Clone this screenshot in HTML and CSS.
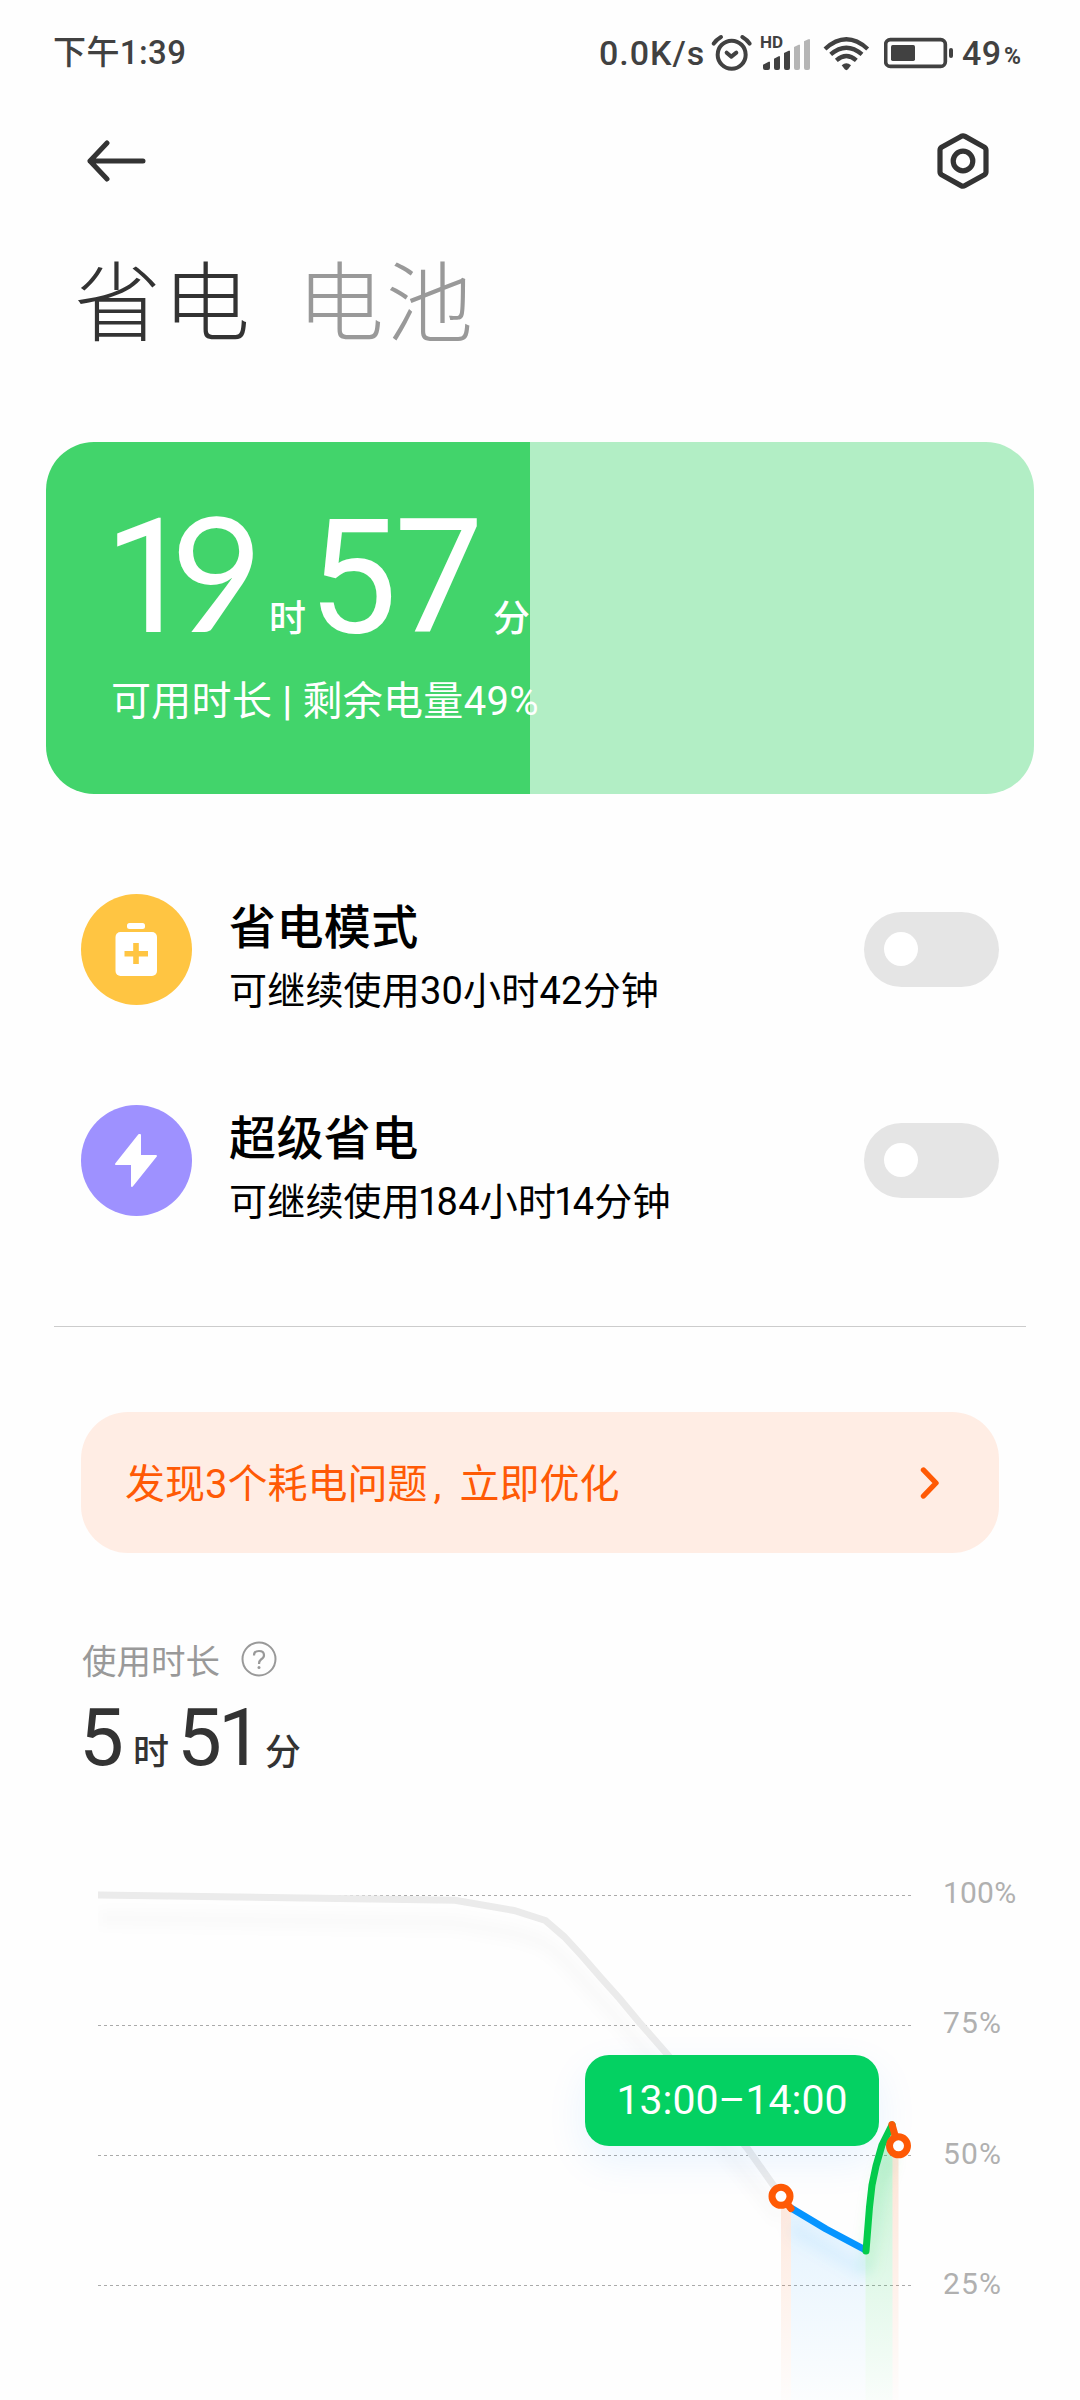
FILE: index.html
```html
<!DOCTYPE html>
<html lang="zh-CN">
<head>
<meta charset="utf-8">
<title>省电</title>
<link rel="stylesheet" href="styles.css">
</head>
<body>
<main class="screen">
  <header class="status">
    <span class="clock">下午1:39</span>
    <span class="speed">0.0K/s</span>
    <svg class="alarm" viewBox="450 95 129 120" fill="none" stroke="#414141" stroke-width="12" stroke-linecap="round" stroke-linejoin="round">
      <circle cx="515" cy="160" r="42"/>
      <path d="M461 127Q469 115 483 107M569 127Q561 115 547 107M500 154L514 166L529 154"/>
    </svg>
    <span class="signal">
      <span class="hd">HD</span>
      <svg viewBox="609 105 147 99" fill="#414141">
        <path d="M612 198V188L629 179H633V198Q633 204 627 204H618Q612 204 612 198ZM645 198V170L659 163H663V198Q663 204 657 204H651Q645 204 645 198ZM675 198V153L689 146H693V198Q693 204 687 204H681Q675 204 675 198Z"/>
        <path fill="#b5b5b5" d="M705 198V135L719 128H723V198Q723 204 717 204H711Q705 204 705 198ZM735 198V118L748 112H753V198Q753 204 747 204H741Q735 204 735 198Z"/>
      </svg>
    </span>
    <svg class="wifi" viewBox="789 100 141 111" fill="none" stroke="#414141" stroke-width="13">
      <path d="M795 142Q859 84 923 142M812 158Q859 118 906 158M829 176Q859 150 889 176"/>
      <path stroke="none" fill="#414141" d="M845 191Q859 178 873 191L864 203Q859 208 854 203Z"/>
    </svg>
    <svg class="battery" viewBox="972 108 210 96">
      <rect x="977" y="116" width="179" height="80" rx="14" fill="none" stroke="#414141" stroke-width="11"/>
      <rect x="993" y="132" width="72" height="48" rx="5" fill="#414141"/>
      <rect x="1167" y="141" width="12" height="30" rx="6" fill="#414141"/>
    </svg>
    <span class="level">49</span><span class="percent">%</span>
  </header>

  <nav class="toolbar">
    <svg class="back" viewBox="0 0 60 42" fill="none" stroke="#333" stroke-width="5" stroke-linecap="round" stroke-linejoin="round">
      <path d="M20 3L3 21L20 39M3 21H56"/>
    </svg>
    <svg class="gear" viewBox="0 0 54 58" fill="none" stroke="#333" stroke-width="5.2" stroke-linejoin="round">
      <path d="M25 4.400Q27 3.300 29 4.400L48 15Q50 16.200 50 18V40Q50 41.800 48 43L29 53.600Q27 54.700 25 53.600L6 43Q4 41.800 4 40V18Q4 16.200 6 15Z"/>
      <circle cx="27" cy="29" r="9.800"/>
    </svg>
  </nav>

  <div class="tabs">
    <h1 class="tab active">省电</h1>
    <h1 class="tab">电池</h1>
  </div>

  <section class="card">
    <div class="big">
      <span class="num first">1<span class="nine">9</span></span><span class="unit">时</span><span class="num second">57</span><span class="unit">分</span>
    </div>
    <div class="caption">可用时长<span class="bar">|</span>剩余电量49%</div>
  </section>

  <section class="modes">
    <div class="mode">
      <svg class="badge" viewBox="0 0 111 111">
        <circle cx="55.500" cy="55.500" r="55.500" fill="#ffc542"/>
        <rect x="46" y="29" width="18" height="6" rx="2.500" fill="#fff"/>
        <rect x="34.500" y="38" width="41.500" height="44" rx="5" fill="#fff"/>
        <path d="M55 49V70M43.500 59.700H67" stroke="#ffc542" stroke-width="5.600"/>
      </svg>
      <div class="info">
        <div class="name">省电模式</div>
        <div class="desc">可继续使用30小时42分钟</div>
      </div>
      <div class="toggle"><i></i></div>
    </div>
    <div class="mode">
      <svg class="badge" viewBox="0 0 111 111">
        <circle cx="55.500" cy="55.500" r="55.500" fill="#9e91ff"/>
        <path d="M58 30L35 59H51V81L75 51H59V30Z" fill="#fff" stroke="#fff" stroke-width="2" stroke-linejoin="round"/>
      </svg>
      <div class="info">
        <div class="name">超级省电</div>
        <div class="desc">可继续使用<span class="one">1</span>84小时<span class="one">1</span>4分钟</div>
      </div>
      <div class="toggle"><i></i></div>
    </div>
  </section>

  <hr class="divider">

  <section class="notice">
    <span class="message">发现3个耗电问题<span class="comma">,</span>立即优化</span>
    <svg viewBox="0 0 20 34" fill="none" stroke="#ff5a05" stroke-width="5.400" stroke-linecap="round" stroke-linejoin="round"><path d="M3.500 4L16 17L3.500 30"/></svg>
  </section>

  <section class="usage">
    <div class="label">使用时长
      <svg viewBox="0 0 36 36" fill="none" stroke="#999" stroke-width="2"><circle cx="18" cy="18" r="16.500"/><path d="M13 14.500Q13 10 18 10Q23 10 23 14.200Q23 16.500 20 18.500Q18 20 18 23" stroke-width="2.200"/><circle cx="18" cy="26.600" r="1.500" fill="#999" stroke="none"/></svg>
    </div>
    <div class="total"><span class="n hours">5</span><span class="u">时</span><span class="n minutes">51</span><span class="u">分</span></div>
  </section>

  <section class="chart">
    <svg viewBox="0 1840 1080 560">
      <defs>
        <linearGradient id="fo" gradientUnits="userSpaceOnUse" x1="0" y1="2130" x2="0" y2="2400"><stop offset="0" stop-color="#ff5a05" stop-opacity=".17"/><stop offset="1" stop-color="#ff5a05" stop-opacity=".01"/></linearGradient>
        <linearGradient id="fb" gradientUnits="userSpaceOnUse" x1="0" y1="2200" x2="0" y2="2400"><stop offset="0" stop-color="#0795ff" stop-opacity=".11"/><stop offset="1" stop-color="#0795ff" stop-opacity=".01"/></linearGradient>
        <linearGradient id="fg" gradientUnits="userSpaceOnUse" x1="0" y1="2124" x2="0" y2="2400"><stop offset="0" stop-color="#04cc4a" stop-opacity=".24"/><stop offset="1" stop-color="#04cc4a" stop-opacity=".02"/></linearGradient>
        <filter id="soft" filterUnits="userSpaceOnUse" x="98" y="1840" width="840" height="560"><feGaussianBlur stdDeviation="7"/></filter>
      </defs>
      <path d="M98 1895.500H912M98 2025.500H912M98 2155.500H912M98 2285.500H912" stroke="#aaa" stroke-width="1" stroke-dasharray="3 3"/>
      <g class="ticks">
        <text class="full" x="943" y="1903">100%</text>
        <text x="943" y="2033">75%</text>
        <text x="943" y="2164">50%</text>
        <text x="943" y="2294">25%</text>
      </g>
      <path d="M781 2196L791 2208V2400H781Z" fill="url(#fo)"/>
      <path d="M791 2208L826 2229L865.500 2250V2400H791Z" fill="url(#fb)"/>
      <path d="M865.500 2250L869 2207L875 2168L882 2145L892.500 2124V2400H865.500Z" fill="url(#fg)"/>
      <path d="M892.500 2124L898.500 2146V2400H892.500Z" fill="url(#fo)"/>
      <g filter="url(#soft)" fill="none" stroke-width="12">
        <path d="M98 1918L455 1923L514 1933L545 1943L564 1959L602 2001L667 2076L781 2219" stroke="#000" stroke-opacity=".022"/>
        <path d="M791 2228L865 2272" stroke="#0795ff" stroke-opacity=".08"/>
        <path d="M866 2272L878 2190L890 2155" stroke="#04cc4a" stroke-opacity=".12"/>
      </g>
      <path d="M98 1895L455 1900.300L514 1910.500L545.500 1920.500L564 1936.500L582 1956L602 1979L619.500 1998.500L639 2022L667 2054L747 2148L781 2196" fill="none" stroke="#ebebeb" stroke-width="7"/>
      <g fill="none" stroke-width="7" stroke-linecap="round" stroke-linejoin="round">
        <path d="M791 2208L826 2229L865.500 2250" stroke="#0795ff"/>
        <path d="M866 2251L869.500 2207L872 2185L876 2166L882 2145L892 2125" stroke="#04cc4a"/>
        <path d="M781 2196L791 2208.500M892 2124.500L898 2146" stroke="#ff5a05"/>
      </g>
      <g fill="#fff" stroke="#ff5a05" stroke-width="7">
        <circle cx="781" cy="2196.300" r="9"/>
        <circle cx="898.500" cy="2145.800" r="9"/>
      </g>
    </svg>
    <div class="tip">13:00–14:00</div>
  </section>
</main>
</body>
</html>
```
FILE: styles.css
```css
* { box-sizing: border-box; }
body { margin: 0; background: #fff; font-family: Roboto, "Noto Sans CJK SC", sans-serif; color: #333; }
svg { display: block; flex: none; }
.screen { width: 1080px; height: 2400px; overflow: hidden; display: flex; flex-direction: column; background: #fefefe; }

.status { height: 106px; padding-left: 53px; display: flex; align-items: center; color: #414141; font-size: 34px; font-weight: 500; line-height: 40px; white-space: nowrap; }
.clock { width: 546px; font-size: 33px; letter-spacing: .4px; }
.speed { width: 111px; letter-spacing: 1px; }
.alarm { width: 43px; height: 40px; }
.signal { margin-left: 8px; margin-right: 12px; width: 50px; position: relative; }
.signal svg { width: 49px; height: 33px; margin-left: 1px; }
.hd { position: absolute; left: -1px; top: -3px; font-size: 17px; line-height: 16px; font-weight: 700; }
.wifi { width: 47px; height: 37px; }
.battery { width: 70px; height: 32px; margin-left: 14px; }
.level { margin-left: 8px; width: 42px; letter-spacing: .5px; }
.percent { font-size: 23px; padding-top: 7px; font-weight: 700; }

.toolbar { height: 110px; padding: 0 90px 0 87px; display: flex; justify-content: space-between; align-items: center; }
.back { width: 60px; height: 42px; }
.gear { width: 54px; height: 58px; }

.tabs { height: 226px; padding: 26px 0 0 74px; display: flex; gap: 45px; }
.tab { margin: 0; font-size: 87px; font-weight: 300; line-height: 110px; letter-spacing: 2px; color: #999; font-family: "Noto Sans CJK SC", sans-serif; }
.tab.active { color: #333; }

.card { height: 352px; margin: 0 46px; padding: 49px 0 0 65px; border-radius: 48px; color: #fff; background: linear-gradient(90deg, #42d46b 484px, #b2eec5 484px); }
.big { display: flex; align-items: baseline; height: 160px; line-height: 160px; font-weight: 500; }
.num { font-size: 159px; font-weight: 400; }
.num.first { width: 158px; letter-spacing: -23px; margin-left: -7px; }
.nine { font-family: Lato, sans-serif; letter-spacing: 0; }
.num.second { width: 185px; letter-spacing: -3px; margin-left: 1px; }
.num.first + .unit { margin-left: 7px; }
.unit { width: 38px; font-size: 37px; }
.caption { margin-top: 25px; font-size: 40px; line-height: 52px; letter-spacing: .3px; }
.bar { margin: 0 10px; font-weight: 500; }

.modes { padding: 99px 81px 0; display: flex; flex-direction: column; gap: 99px; }
.mode { height: 112px; display: flex; align-items: center; color: #000; }
.badge { width: 111px; height: 111px; }
.info { flex: 1; padding: 15px 0 0 37px; }
.name { font-size: 47px; line-height: 62px; font-weight: 500; letter-spacing: .4px; }
.desc { font-size: 38px; line-height: 52px; margin-top: 6px; letter-spacing: .2px; }
.one { margin: 0 -3px 0 -2px; }
.toggle { width: 135px; height: 75px; border-radius: 38px; background: #e5e5e5; padding: 20px; }
.toggle i { display: block; width: 34px; height: 34px; border-radius: 50%; background: #fff; }

.divider { width: 972px; height: 1px; margin: 110px 54px 0; border: 0; background: #ccc; }

.notice { margin: 85px 81px 0; height: 141px; padding: 0 59px 0 44px; border-radius: 47px; background: #ffede4; color: #ff5a05; font-size: 40px; display: flex; align-items: center; justify-content: space-between; }
.message { padding-bottom: 4px; }
.notice svg { width: 20px; height: 34px; }
.comma { display: inline-block; width: 32px; padding-left: 6px; }

.usage { padding: 82px 0 0 82px; height: 287px; }
.label { display: flex; align-items: center; gap: 21px; height: 48px; font-size: 34.5px; color: #999; }
.label svg { width: 36px; height: 36px; }
.total { display: flex; align-items: baseline; line-height: 90px; margin-top: 10px; }
.n { font-size: 80px; }
.hours { width: 46px; margin-left: -3px; }
.minutes { letter-spacing: -4px; width: 80px; }
.u { font-size: 36px; font-weight: 500; margin: 0 8px; }

.chart { position: relative; height: 560px; }
.chart svg { width: 1080px; height: 560px; }
.ticks { font-size: 30px; fill: #b0b0b0; letter-spacing: 1.2px; }
.ticks .full { letter-spacing: .2px; }
.tip { position: absolute; left: 585px; top: 215px; width: 294px; height: 91px; border-radius: 24px; background: #04d162; color: #fff; font-size: 41px; line-height: 91px; text-align: center; box-shadow: 0 15px 40px rgba(0, 130, 255, .09); }
```
